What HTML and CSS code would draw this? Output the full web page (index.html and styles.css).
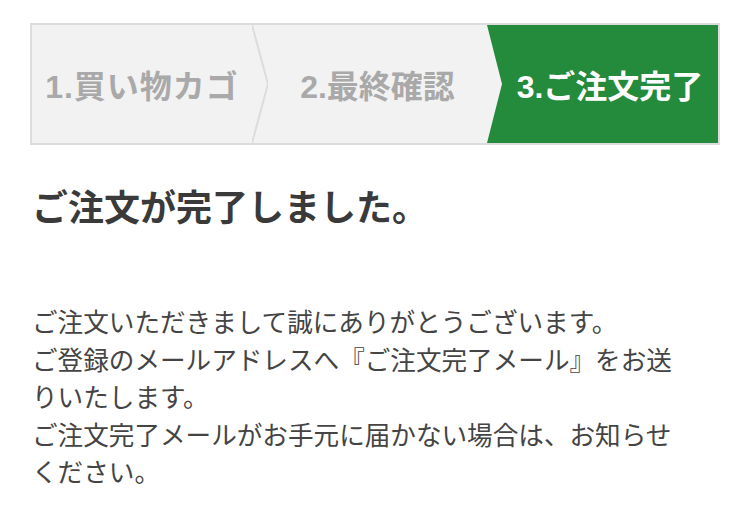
FILE: index.html
```html
<!DOCTYPE html>
<html lang="ja">
<head>
    <meta charset="UTF-8">
    <meta name="viewport" content="width=device-width, initial-scale=1.0">
    <title>ご注文完了</title>
    <link rel="stylesheet" href="styles.css">
</head>
<body>
    <div class="container">
        <div class="steps">
            <div class="step step-cart">1.買い物カゴ</div>
            <div class="step-sep">
                <svg width="16" height="118" viewBox="0 0 16 118">
                    <polyline points="0,0 16,59 0,118" fill="none" stroke="#dcdcdc" stroke-width="2"/>
                </svg>
            </div>
            <div class="step step-confirm">2.最終確認</div>
            <div class="step step-done">3.ご注文完了</div>
        </div>

        <h2 class="title">ご注文が完了しました。</h2>

        <p class="message">
            ご注文いただきまして誠にありがとうございます。<br>
            ご登録のメールアドレスへ『ご注文完了メール』をお送りいたします。<br>
            ご注文完了メールがお手元に届かない場合は、お知らせください。
        </p>
    </div>
</body>
</html>
```

FILE: styles.css
```css
body {
    margin: 0;
    font-family: "Liberation Sans", "Noto Sans CJK JP", sans-serif;
    background-color: #fff;
}
.container {
    padding: 23px 30px 0 30px;
}
.steps {
    display: flex;
    height: 118px;
    border: 2px solid #dcdcdc;
    background-color: #f2f2f2;
}
.step {
    display: flex;
    align-items: center;
    justify-content: center;
    font-size: 32px;
    font-weight: bold;
    color: #a9a9a9;
    white-space: nowrap;
}
.step-cart {
    width: 220px;
    letter-spacing: 1px;
}
.step-sep {
    width: 16px;
    display: flex;
}
.step-confirm {
    width: 219px;
}
.step-done {
    width: 231px;
    padding-left: 15px;
    box-sizing: border-box;
    background-color: #248a3c;
    color: #fff;
    clip-path: polygon(0 0, 100% 0, 100% 100%, 0 100%, 15px 50%);
}
.title {
    margin: 40px 0 0 2px;
    font-size: 36px;
    line-height: 48px;
    font-weight: bold;
    color: #3a3a3a;
}
.message {
    margin: 72px 0 0 2px;
    max-width: 660px;
    font-size: 25.6px;
    line-height: 37.5px;
    color: #444;
}
```
